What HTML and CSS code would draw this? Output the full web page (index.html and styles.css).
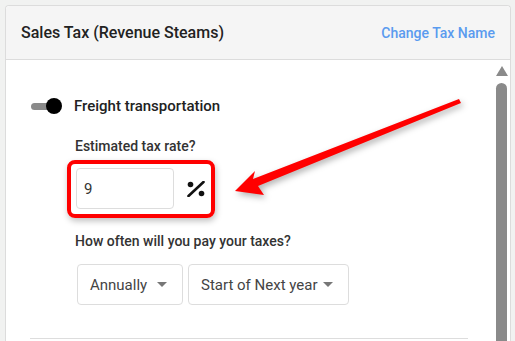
FILE: index.html
```html
<!DOCTYPE html>
<html lang="en">

<head>
    <meta charset="UTF-8">
    <meta name="viewport" content="width=device-width, initial-scale=1.0">
    <title>Sales Tax</title>
    <link rel="stylesheet" href="styles.css">
</head>

<body>
    <div class="card">
        <div class="card-header">
            <h2 class="card-title">Sales Tax (Revenue Steams)</h2>
            <a class="header-link" href="#">Change Tax Name</a>
        </div>

        <div class="card-body">
            <div class="panel">
                <div class="toggle-row">
                    <span class="toggle"><span class="toggle-knob"></span></span>
                    <span class="toggle-label">Freight transportation</span>
                </div>

                <div class="sub-section">
                    <label class="field-label" for="taxRate">Estimated tax rate?</label>
                    <div class="rate-row">
                        <input type="text" id="taxRate" class="rate-input" value="9">
                        <svg class="percent-icon" width="18" height="16" viewBox="0 0 18 16">
                            <circle cx="3.5" cy="3.5" r="2.8" fill="#111"/>
                            <circle cx="14.5" cy="12.5" r="2.8" fill="#111"/>
                            <path d="M1.5 15 L16.5 1" stroke="#111" stroke-width="2.6" stroke-linecap="round"/>
                        </svg>
                        <span class="highlight"></span>
                    </div>

                    <label class="field-label second">How often will you pay your taxes?</label>
                    <div class="select-row">
                        <div class="select small">Annually<span class="caret"></span></div>
                        <div class="select wide">Start of Next year<span class="caret"></span></div>
                    </div>
                </div>

                <hr class="divider">
            </div>

            <div class="scrollbar">
                <span class="scroll-up"></span>
                <span class="scroll-thumb"></span>
            </div>

            <svg class="pointer-arrow" width="515" height="341" viewBox="0 0 515 341">
                <polygon points="235,191 255,171 253,179 459,99 461,103 258,186 264,195" fill="#ff0000"/>
            </svg>
        </div>
    </div>
</body>

</html>
```

FILE: styles.css
```css
body {
    font-family: Roboto, "Liberation Sans", sans-serif;
    margin: 0;
    background-color: #f1f2f1;
    height: 100vh;
    overflow: hidden;
}

.card {
    margin: 5px 4px 0 5px;
    height: calc(100vh - 5px);
    box-sizing: border-box;
    display: flex;
    flex-direction: column;
    border: 1px solid #dcdcdc;
    border-bottom: none;
    border-radius: 4px 4px 0 0;
    background-color: white;
}

.card-header {
    flex: none;
    height: 53px;
    padding: 0 15px;
    display: flex;
    align-items: center;
    justify-content: space-between;
    background-color: #f5f5f5;
    border-bottom: 1px solid #dcdcdc;
    border-radius: 4px 4px 0 0;
}

.card-title {
    margin: 0;
    font-size: 16px;
    font-weight: 500;
    color: #222;
}

.header-link {
    font-size: 14px;
    font-weight: 500;
    color: #5a9bef;
    text-decoration: none;
}

.card-body {
    flex: 1;
    display: flex;
    min-height: 0;
    overflow: hidden;
}

.panel {
    flex: 1;
    padding: 36px 25px 0 24px;
}

.toggle-row {
    display: flex;
    align-items: center;
    height: 20px;
}

.toggle {
    position: relative;
    width: 31px;
    height: 16px;
    margin-left: 1px;
    display: flex;
    align-items: center;
}

.toggle::before {
    content: "";
    width: 20px;
    height: 7px;
    border-radius: 4px;
    background-color: #8a8a8a;
}

.toggle-knob {
    position: absolute;
    right: 0;
    top: 0;
    width: 16px;
    height: 16px;
    border-radius: 50%;
    background-color: black;
}

.toggle-label {
    margin-left: 12px;
    font-size: 15px;
    font-weight: 500;
    color: #222;
}

.sub-section {
    padding-left: 45px;
    margin-top: 20px;
}

.field-label {
    display: block;
    font-size: 14px;
    font-weight: 500;
    line-height: 20px;
    color: #333;
}

.field-label.second {
    margin-top: 22px;
}

.rate-row {
    position: relative;
    display: flex;
    align-items: center;
    width: 136px;
    margin-top: 12px;
    margin-left: 1px;
}

.rate-input {
    width: 98px;
    height: 41px;
    box-sizing: border-box;
    padding: 0 7px;
    border: 1px solid #ddd;
    border-radius: 4px;
    font-family: inherit;
    font-size: 15px;
    color: #333;
}

.percent-icon {
    margin-left: 13px;
}

.highlight {
    position: absolute;
    left: -9px;
    top: -8px;
    right: -3px;
    bottom: -9px;
    border: 4px solid #ff0000;
    border-radius: 8px;
    box-shadow: 1px 3px 6px rgba(0, 0, 0, 0.25);
}

.select-row {
    display: flex;
    gap: 5px;
    margin-top: 13px;
    margin-left: 2px;
}

.select {
    height: 41px;
    box-sizing: border-box;
    display: flex;
    align-items: center;
    justify-content: space-between;
    padding: 0 15px 0 12px;
    border: 1px solid #ddd;
    border-radius: 4px;
    font-size: 15px;
    color: #444;
}

.select.small {
    width: 106px;
}

.select.wide {
    width: 161px;
}

.caret {
    width: 0;
    height: 0;
    border-left: 5px solid transparent;
    border-right: 5px solid transparent;
    border-top: 5px solid #777;
}

.divider {
    margin: 33px 0 0;
    border: none;
    border-top: 1px solid #ddd;
}

.scrollbar {
    width: 17px;
    display: flex;
    flex-direction: column;
    align-items: center;
    padding-top: 6px;
}

.scroll-up {
    flex: none;
    width: 0;
    height: 0;
    border-left: 6px solid transparent;
    border-right: 6px solid transparent;
    border-bottom: 10px solid #8a8a8a;
}

.scroll-thumb {
    flex: 1;
    margin-top: 7px;
    width: 11px;
    border-radius: 6px 6px 0 0;
    background-color: #8a8a8a;
}

.pointer-arrow {
    position: absolute;
    left: 0;
    top: 0;
    filter: drop-shadow(2px 3px 3px rgba(0, 0, 0, 0.3));
}
```
